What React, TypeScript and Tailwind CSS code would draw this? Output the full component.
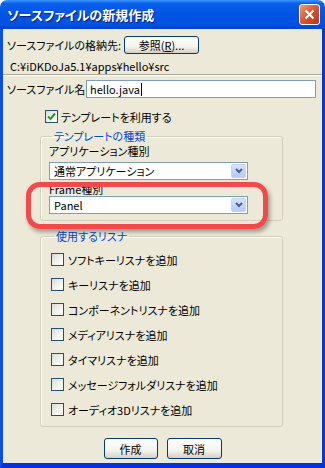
import React from 'react';

const listeners = [
  'ソフトキーリスナを追加',
  'キーリスナを追加',
  'コンポーネントリスナを追加',
  'メディアリスナを追加',
  'タイマリスナを追加',
  'メッセージフォルダリスナを追加',
  'オーディオ3Dリスナを追加',
];

function CheckBox({ checked = false }: { checked?: boolean }) {
  return (
    <span className="w-[13px] h-[13px] shrink-0 border border-[#1C5180] bg-[linear-gradient(135deg,#DCDCD7_0%,#F4F4F0_60%,#FFFFFF_100%)] flex items-center justify-center">
      {checked && (
        <svg width="9" height="9" viewBox="0 0 9 9">
          <path d="M1 4.5 L3.5 7 L8 1.5" fill="none" stroke="#21A121" strokeWidth="2" />
        </svg>
      )}
    </span>
  );
}

function Select({ value }: { value: string }) {
  return (
    <div className="w-[199px] h-[18px] border border-[#7F9DB9] bg-white flex items-center justify-between">
      <span className="pl-[4px] whitespace-nowrap">{value}</span>
      <span className="w-[15px] h-[14px] mr-[1px] rounded-[2px] bg-[linear-gradient(to_bottom,#D6E3FD,#B4C9F8)] border border-[#C3D3FD] flex items-center justify-center">
        <svg width="8" height="6" viewBox="0 0 8 6">
          <path d="M1 1 L4 4 L7 1" fill="none" stroke="#4D6185" strokeWidth="2" />
        </svg>
      </span>
    </div>
  );
}

function XpButton({ label, className }: { label: React.ReactNode; className: string }) {
  return (
    <button
      className={`${className} shrink-0 rounded-[3px] border border-[#003C74] bg-[linear-gradient(to_bottom,#FFFFFF,#F3F3EF_60%,#D6D0C5)] text-[11px] leading-[14px] text-black flex items-center justify-center whitespace-nowrap`}
    >
      {label}
    </button>
  );
}

export default function App() {
  return (
    <div className="relative w-[325px] h-[468px] overflow-hidden flex flex-col font-['Noto_Sans_CJK_JP','Noto_Sans',sans-serif] [font-feature-settings:'palt'] text-black">
      {/* title bar */}
      <div className="h-[29px] shrink-0 rounded-t-[7px] bg-[linear-gradient(to_bottom,#3D95FF_0%,#0A5FEA_12%,#0054E3_50%,#0052E0_85%,#0043C8_100%)] flex items-center justify-between pl-[7px] pr-[5px]">
        <span className="text-white font-bold text-[13px] leading-[16px] whitespace-nowrap [text-shadow:1px_1px_0_#0A1E80]">
          ソースファイルの新規作成
        </span>
        <span className="w-[21px] h-[21px] rounded-[3px] border border-white bg-[linear-gradient(135deg,#F09A7C,#D9552F_50%,#C1320F)] flex items-center justify-center">
          <svg width="11" height="11" viewBox="0 0 11 11">
            <path d="M1.5 1.5 L9.5 9.5 M9.5 1.5 L1.5 9.5" stroke="white" strokeWidth="2" />
          </svg>
        </span>
      </div>

      {/* body */}
      <div className="flex-1 min-h-0 flex flex-col bg-[#ECE9D8] border-l-[3px] border-r-[3px] border-b-[5px] border-l-[#0A4FE0] border-r-[#0838C8] border-b-[#0831D9] text-[11px] leading-[14px] whitespace-nowrap">
        <div className="mt-[7px] pl-[4px] h-[18px] flex items-center">
          <span className="w-[117px] shrink-0">ソースファイルの格納先:</span>
          <XpButton className="w-[75px] h-[18px]" label={<span>参照(<span className="underline">R</span>)...</span>} />
        </div>
        <div className="mt-[5px] pl-[7px] h-[14px]">C:¥iDKDoJa5.1¥apps¥hello¥src</div>
        <div className="mt-[1px] border-t border-[#ACA899] border-b border-b-white" />

        <div className="mt-[4px] pl-[4px] h-[18px] flex items-center">
          <span className="w-[79px] shrink-0">ソースファイル名</span>
          <div className="w-[230px] h-[18px] border border-[#7F9DB9] bg-white flex items-center pl-[3px]">
            hello.java<span className="w-[1px] h-[13px] bg-black ml-[1px]" />
          </div>
        </div>

        <div className="mt-[12px] pl-[42px] h-[13px] flex items-center gap-[3px]">
          <CheckBox checked />
          <span>テンプレートを利用する</span>
        </div>

        <fieldset className="mt-[6px] ml-[37px] w-[243px] border border-[#D0D0BF] rounded-[3px] px-[8px] pb-[6px] shadow-[inset_1px_1px_0_#fff]">
          <legend className="ml-[3px] px-[2px] h-[14px] text-[#0046D5]">テンプレートの種類</legend>
          <div className="mt-[1px] h-[14px]">アプリケーション種別</div>
          <div className="mt-[4px]">
            <Select value="通常アプリケーション" />
          </div>
          <div className="mt-[2px] h-[14px]">Frame種別</div>
          <Select value="Panel" />
        </fieldset>

        <fieldset className="mt-[8px] ml-[37px] w-[243px] border border-[#D0D0BF] rounded-[3px] pl-[10px] pt-[10px] pb-[10px] shadow-[inset_1px_1px_0_#fff]">
          <legend className="ml-[3px] px-[2px] h-[14px] text-[#0046D5]">使用するリスナ</legend>
          <div className="flex flex-col gap-[12px]">
            {listeners.map((l) => (
              <div key={l} className="h-[13px] flex items-center gap-[4px]">
                <CheckBox />
                <span>{l}</span>
              </div>
            ))}
          </div>
        </fieldset>

        <div className="mt-[11px] flex justify-center gap-[9px]">
          <XpButton className="w-[54px] h-[21px]" label="作成" />
          <XpButton className="w-[55px] h-[21px]" label="取消" />
        </div>
      </div>

      {/* red highlight annotation */}
      <div className="absolute left-[26px] top-[182px] w-[242px] h-[47px] border-[5px] border-[#F24A4A] rounded-[14px] shadow-[2px_3px_4px_rgba(0,0,0,0.35)]" />
    </div>
  );
}
